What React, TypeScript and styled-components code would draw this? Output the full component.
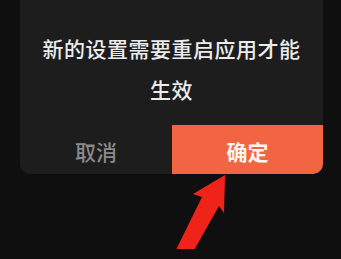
import React from "react";
import styled, { createGlobalStyle } from "styled-components";

const Global = createGlobalStyle`
  html, body { margin: 0; padding: 0; background: #0f0f0f; }
  body { width: 341px; height: 259px; overflow: hidden; font-family: "Noto Sans CJK SC", "Noto Sans", sans-serif; }
`;

const Page = styled.div`
  position: relative;
  width: 341px;
  height: 259px;
  background: #0f0f0f;
  padding-left: 20px;
  box-sizing: border-box;
`;

const Card = styled.div`
  width: 303px;
  margin-top: -10px;
  background: #1d1d1d;
  border-radius: 10px;
  overflow: hidden;
  display: flex;
  flex-direction: column;
`;

const Message = styled.div`
  padding: 38px 10px 15px;
  color: #ececec;
  font-size: 21px;
  line-height: 41px;
  letter-spacing: 0.5px;
  text-align: center;
  font-weight: 500;
`;

const Actions = styled.div`
  display: grid;
  grid-template-columns: 152px 151px;
  height: 49px;
`;

const Action = styled.button<{ $primary?: boolean }>`
  border: none;
  margin: 0;
  padding: 0;
  font-family: inherit;
  font-size: 21px;
  font-weight: ${(p) => (p.$primary ? 700 : 500)};
  color: ${(p) => (p.$primary ? "#fff4ee" : "#8a8a8a")};
  background: ${(p) => (p.$primary ? "#f26542" : "transparent")};
  display: flex;
  align-items: center;
  justify-content: center;
  padding-top: 3px;
`;

const Arrow = styled.svg`
  position: absolute;
  left: 0;
  top: 0;
  pointer-events: none;
`;

export default function App() {
  return (
    <>
      <Global />
      <Page>
        <Card>
          <Message>
            新的设置需要重启应用才能
            <br />
            生效
          </Message>
          <Actions>
            <Action>取消</Action>
            <Action $primary>确定</Action>
          </Actions>
        </Card>
        <Arrow width="341" height="259" viewBox="0 0 341 259">
          <polygon
            points="225,185 224,223 219,216 193,262 175,262 202,207 193,204"
            fill="#f0231b"
          />
        </Arrow>
      </Page>
    </>
  );
}
